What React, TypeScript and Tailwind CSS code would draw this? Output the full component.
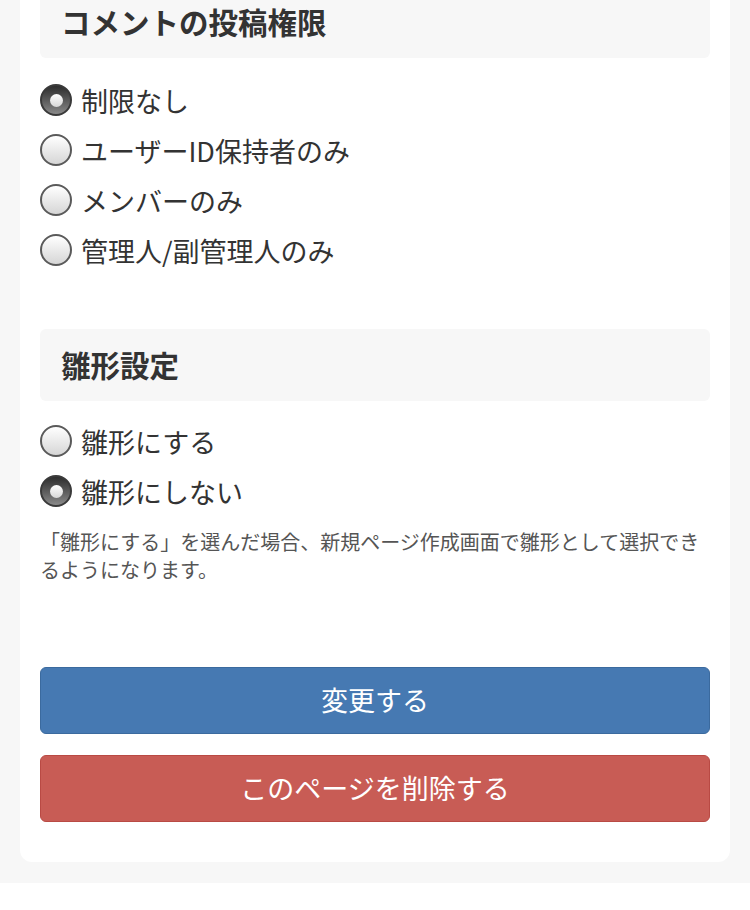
import React from 'react'

const font = { fontFamily: '"Noto Sans CJK JP", "Noto Sans", sans-serif' }

function Radio({ label, checked }: { label: string; checked?: boolean }) {
  return (
    <label className="flex h-[50px] items-center gap-[9px]">
      {checked ? (
        <span className="flex h-[32px] w-[32px] items-center justify-center rounded-full border-2 border-[#3a3a3a] bg-gradient-to-b from-[#2e2e2e] to-[#8a8a8a]">
          <span className="h-[13px] w-[13px] rounded-full bg-gradient-to-b from-white to-[#d8d8d8]" />
        </span>
      ) : (
        <span className="h-[32px] w-[32px] rounded-full border-2 border-[#5a5a5a] bg-gradient-to-b from-white to-[#d6d6d6]" />
      )}
      <span className="text-[27px] leading-none text-[#333]">{label}</span>
    </label>
  )
}

function Heading({ children, className = '' }: { children: React.ReactNode; className?: string }) {
  return (
    <div className={`flex h-[72px] items-center rounded-md bg-[#f7f7f7] px-[21px] ${className}`}>
      <h2 className="text-[29.5px] font-bold leading-none text-[#333]">{children}</h2>
    </div>
  )
}

export default function App() {
  return (
    <div style={font} className="min-h-[910px] bg-white">
      <div className="bg-[#f7f7f7] pb-[21px]">
        <div className="mx-[20px] flex flex-col rounded-b-xl bg-white px-[20px] pb-[40px]">
          <Heading className="-mt-[14px]">コメントの投稿権限</Heading>
          <div className="mt-[17px]">
            <Radio label="制限なし" checked />
            <Radio label="ユーザーID保持者のみ" />
            <Radio label="メンバーのみ" />
            <Radio label="管理人/副管理人のみ" />
          </div>

          <Heading className="mt-[54px]">雛形設定</Heading>
          <div className="mt-[15px]">
            <Radio label="雛形にする" />
            <Radio label="雛形にしない" checked />
          </div>
          <p className="mt-[12px] text-[20px] leading-[28px] text-[#555]">
            「雛形にする」を選んだ場合、新規ページ作成画面で雛形として選択できるようになります。
          </p>

          <button className="mt-[83px] h-[67px] rounded-md border border-[#3b6a9e] bg-[#4679b2] text-[27px] text-white">
            変更する
          </button>
          <button className="mt-[21px] h-[67px] rounded-md border border-[#b94a44] bg-[#c85c55] text-[27px] text-white">
            このページを削除する
          </button>
        </div>
      </div>
    </div>
  )
}
